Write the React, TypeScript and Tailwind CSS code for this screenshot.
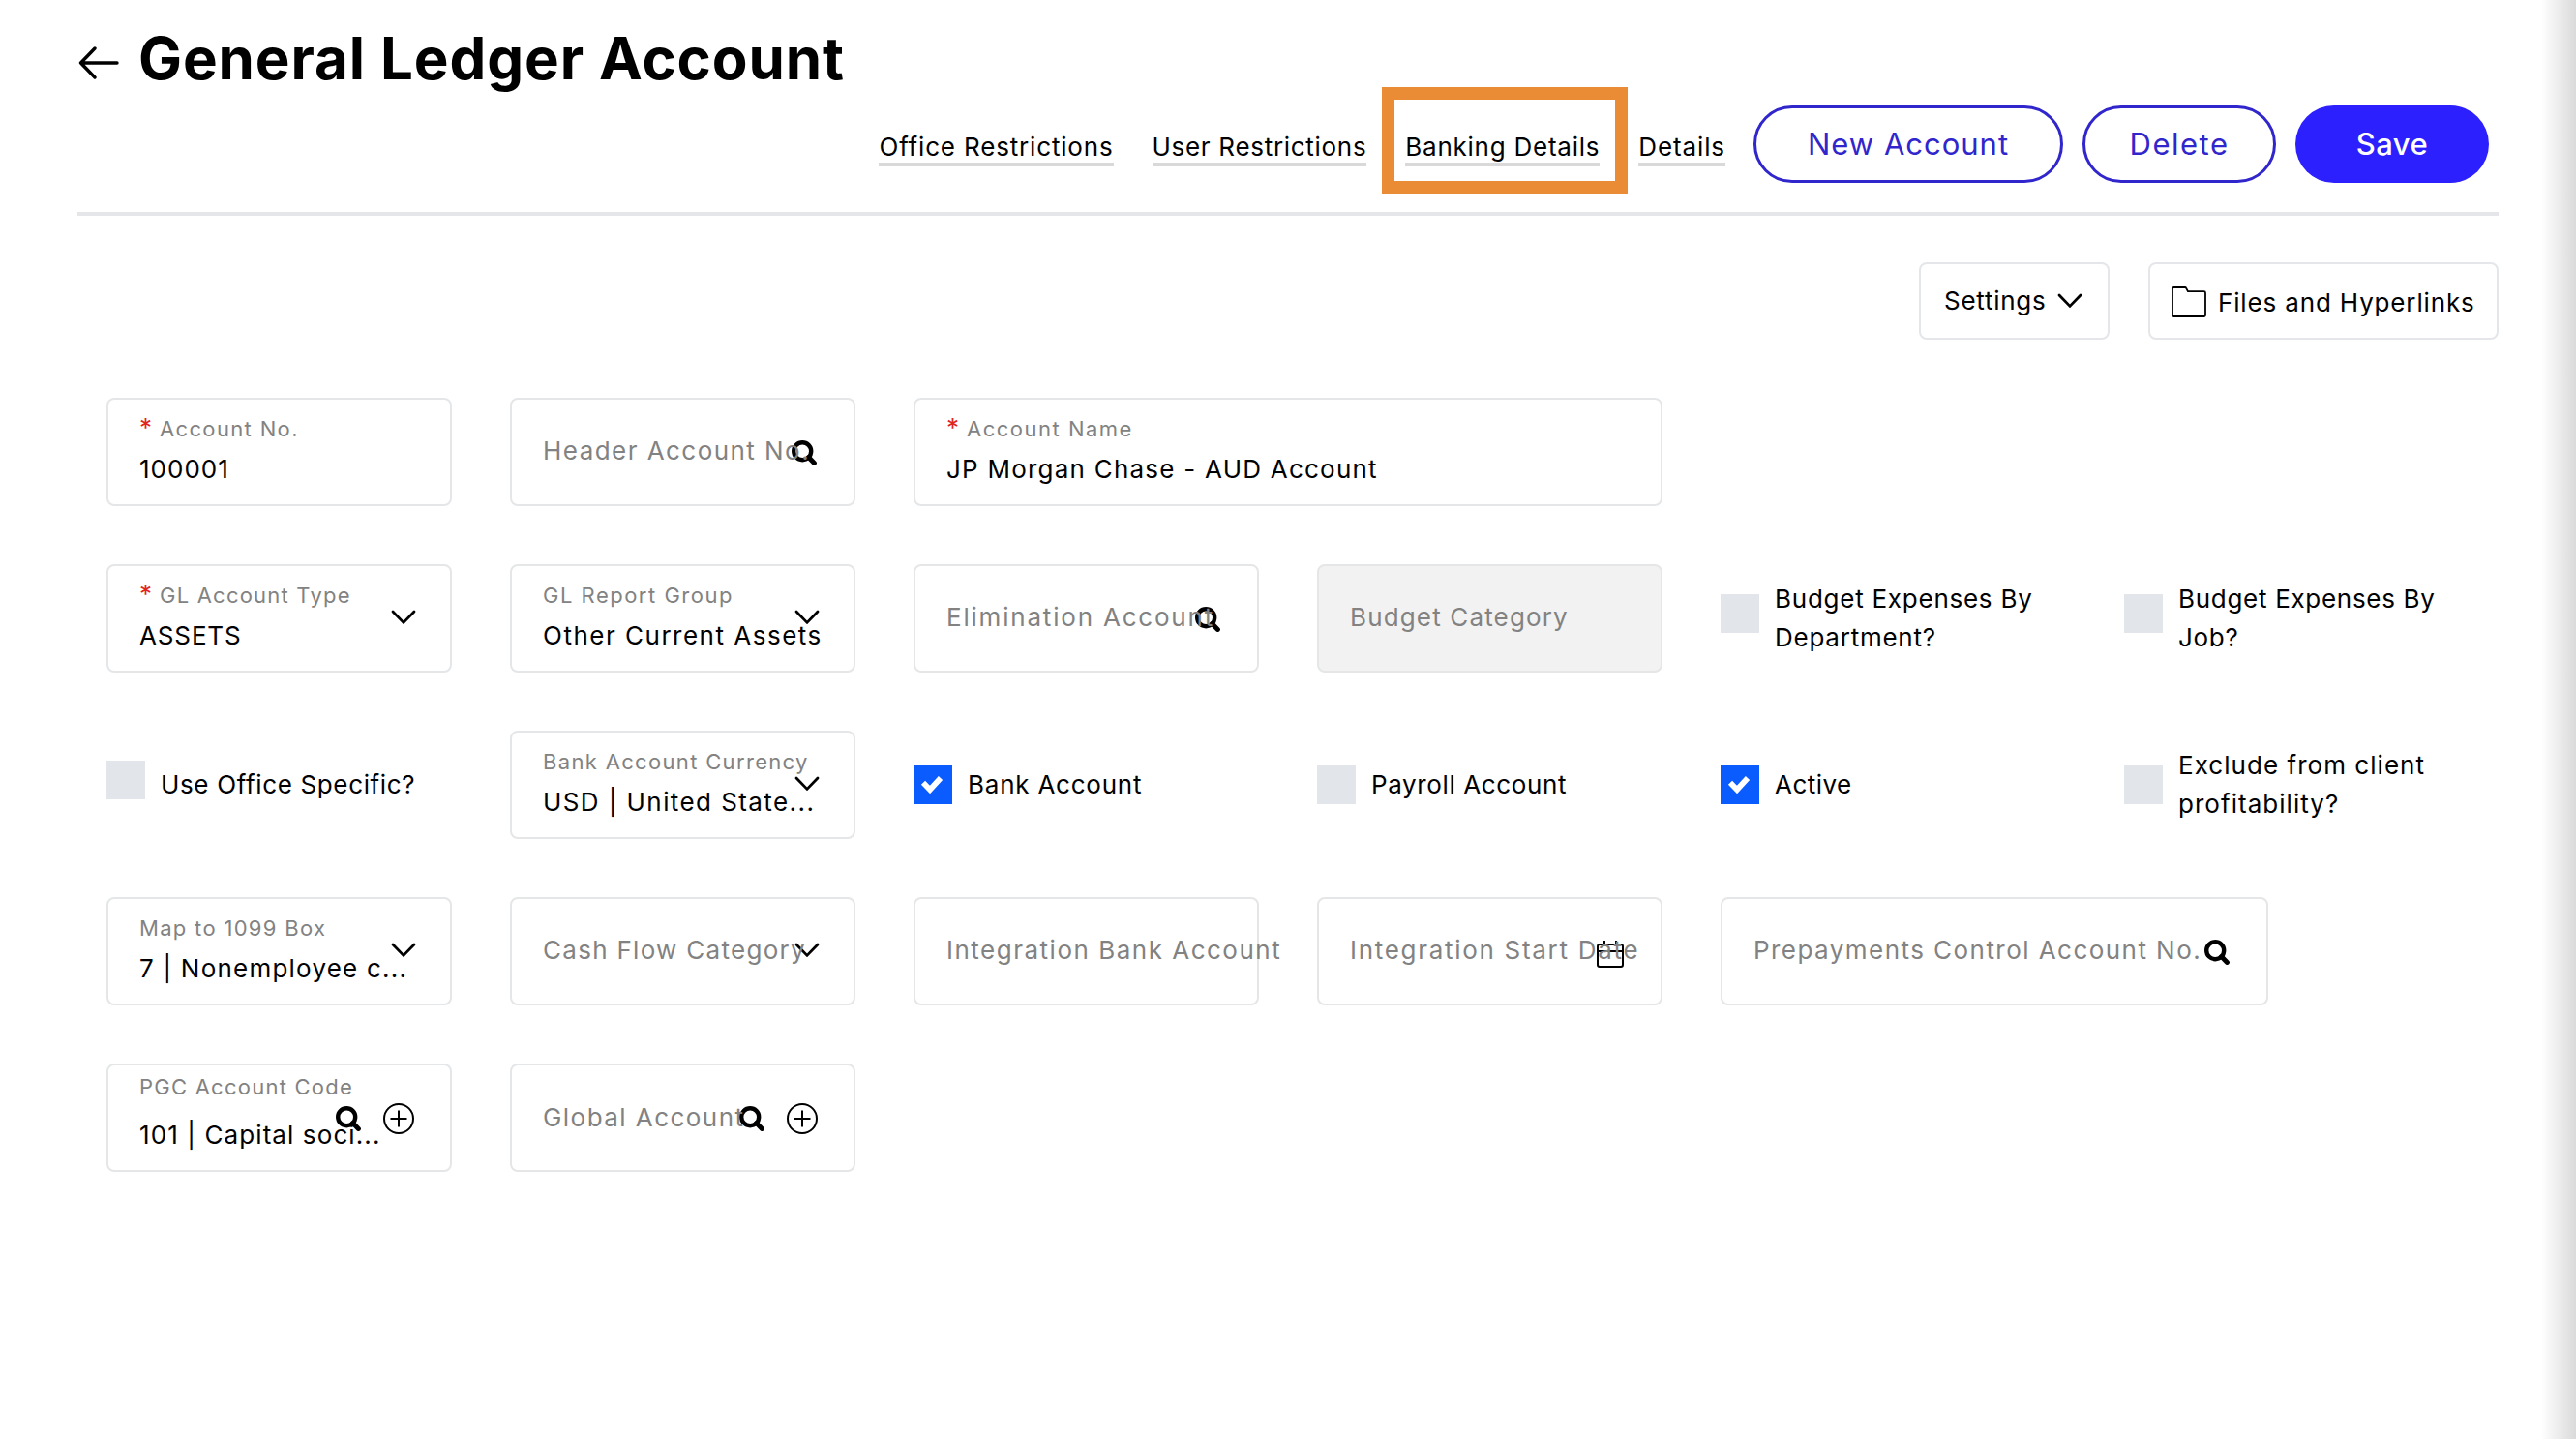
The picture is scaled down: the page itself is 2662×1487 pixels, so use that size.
import type { ReactNode } from 'react';
import clsx from 'clsx';

type FieldIcon = 'chevron' | 'search' | 'calendar' | 'searchAdd';

interface FieldProps {
  label: string;
  labelClass: string;
  value?: string;
  valueClass?: string;
  required?: boolean;
  disabled?: boolean;
  // label sits a little higher on lookups that can create a record
  tall?: boolean;
  icon?: FieldIcon;
  className?: string;
}

interface CheckProps {
  lines: string[];
  textClass: string;
  checked?: boolean;
  raised?: boolean;
}

function BackArrow() {
  return (
    <svg className="w-[42px] h-[34px]" viewBox="0 0 42 34" fill="none" stroke="black" strokeWidth="3.4" strokeLinecap="round" strokeLinejoin="round">
      <path d="M40 17H2.5M17 2 2.5 17 17 32" />
    </svg>
  );
}

function Chevron({ className }: { className?: string }) {
  return (
    <svg className={clsx('w-[26px] h-4', className)} viewBox="0 0 26 16" fill="none" stroke="black" strokeWidth="2.8" strokeLinecap="round" strokeLinejoin="round">
      <path d="M2 2 13 13.4 24 2" />
    </svg>
  );
}

function SearchIcon({ className }: { className?: string }) {
  return (
    <svg className={clsx('w-[26px] h-[26px]', className)} viewBox="0 0 26 26" fill="none" stroke="black" strokeLinecap="round">
      <circle cx="11.2" cy="11.2" r="9" strokeWidth="4.4" />
      <path d="M17.6 17.6 23.4 23.4" strokeWidth="5" />
    </svg>
  );
}

function PlusCircle({ className }: { className?: string }) {
  return (
    <svg className={clsx('w-8 h-8', className)} viewBox="0 0 32 32" fill="none" stroke="black" strokeWidth="2">
      <circle cx="16" cy="16" r="15" />
      <path d="M16 7.5v17M7.5 16h17" />
    </svg>
  );
}

function CalendarIcon({ className }: { className?: string }) {
  return (
    <svg className={clsx('w-7 h-7', className)} viewBox="0 0 28 28" fill="none" stroke="black" strokeWidth="2">
      <rect x="1" y="4" width="26" height="23" rx="2" />
      <path d="M1 11h26M8 0v4M20 0v4" />
    </svg>
  );
}

function FolderIcon() {
  return (
    <svg className="w-9 h-8" viewBox="0 0 36 32" fill="none" stroke="black" strokeWidth="1.8" strokeLinejoin="round">
      <path d="M1 2.5A1.5 1.5 0 0 1 2.500 1H13.800a1.500 1.500 0 0 1 1.400.9L17 5.200H33.500A1.500 1.500 0 0 1 35 6.700V29.500a1.500 1.500 0 0 1-1.500 1.500H2.500A1.500 1.500 0 0 1 1 29.500z" />
    </svg>
  );
}

function Field({ label, labelClass, value, valueClass, required, disabled, tall, icon, className }: FieldProps) {
  return (
    <div
      className={clsx(
        'relative h-28 rounded-lg border-2 border-[#e4e6e8] pl-8 whitespace-nowrap',
        disabled && 'bg-[#f2f2f2]',
        className
      )}
    >
      {icon === 'chevron' && <Chevron className="absolute right-[35px] top-[45px]" />}
      {icon === 'search' && <SearchIcon className="absolute right-[38px] top-[42px]" />}
      {icon === 'calendar' && <CalendarIcon className="absolute right-[38px] top-[43px]" />}
      {icon === 'searchAdd' && (
        <>
          <SearchIcon className="absolute right-[92px] top-[42px]" />
          <PlusCircle className="absolute right-[37px] top-[39px]" />
        </>
      )}

      {value ? (
        <div className={clsx('relative', tall ? 'pt-2' : 'pt-4')}>
          <div className={clsx('text-[22px] leading-7 text-[#828282]', labelClass)}>
            {required && <span className="inline-block w-[21px] text-[26px] leading-none tracking-normal text-[#e0261c]">*</span>}
            {label}
          </div>
          <div className={clsx('text-[26px] leading-8', tall ? 'mt-5' : 'mt-3', valueClass)}>{value}</div>
        </div>
      ) : (
        <div className={clsx('relative text-[26px] leading-8 text-[#828282]', tall ? 'pt-[38px]' : 'pt-[37px]', labelClass)}>
          {label}
        </div>
      )}
    </div>
  );
}

function Check({ lines, textClass, checked, raised }: CheckProps) {
  return (
    <div className="flex h-28 items-center gap-4">
      <div className={clsx('w-10 h-10 shrink-0', checked ? 'bg-[#0a5cff]' : 'bg-[#e2e5ea]', raised && '-mt-2.5')}>
        {checked && (
          <svg className="w-10 h-10" viewBox="0 0 40 40" fill="none" stroke="white" strokeWidth="5.8">
            <path d="M10 17.800 17 25 28 13" />
          </svg>
        )}
      </div>
      <div className={clsx('text-[26px] leading-10 whitespace-nowrap', textClass)}>
        {lines.map((line) => (
          <div key={line}>{line}</div>
        ))}
      </div>
    </div>
  );
}

function HeaderLink({ className, children }: { className: string; children: ReactNode }) {
  return (
    <a className={clsx('relative border-b-4 border-[#d9d9d9] text-[26px] leading-8 whitespace-nowrap', className)}>
      {children}
    </a>
  );
}

export default function App() {
  return (
    <div className="relative w-[2662px] h-[1487px] overflow-hidden bg-white px-20 font-[Inter,'Liberation_Sans',sans-serif] text-black">
      {/* Header */}
      <header className="border-b-4 border-[#e4e6e9] pt-7 pb-[30px]">
        <div className="flex h-16 items-center gap-5 pl-px">
          <div className="pt-2.5">
            <BackArrow />
          </div>
          <h1 className="text-[60px] leading-[64px] font-bold tracking-[0.9px] whitespace-nowrap">General Ledger Account</h1>
        </div>

        <div className="mt-[17px] flex h-20 justify-end gap-5 pr-2.5">
          <nav className="mr-[9px] flex items-start gap-10 pt-[27px]">
            <HeaderLink className="tracking-[0.83px]">Office Restrictions</HeaderLink>
            <HeaderLink className="tracking-[0.7px]">User Restrictions</HeaderLink>
            <HeaderLink className="tracking-[0.75px]">
              Banking Details
              <span className="absolute -left-6 -top-[46px] w-[254px] h-[110px] border-[13px] border-[#ea8b35]" />
            </HeaderLink>
            <HeaderLink className="tracking-[0.9px]">Details</HeaderLink>
          </nav>
          <button className="w-80 rounded-full border-[3px] border-[#3026cc] text-[31px] tracking-[1px] text-[#3026cc]">
            New Account
          </button>
          <button className="w-50 rounded-full border-[3px] border-[#3026cc] text-[31px] tracking-[1.5px] text-[#3026cc]">
            Delete
          </button>
          <button className="w-50 rounded-full bg-[#2d20fe] text-[31px] font-medium tracking-[0.5px] text-white">Save</button>
        </div>
      </header>

      {/* Toolbar */}
      <div className="mt-12 flex justify-end gap-10">
        <button className="flex w-[197px] h-20 items-center rounded-lg border-2 border-[#e4e6e9] pl-6 pb-0.5 text-[26px]">
          <span className="w-[117px] text-left tracking-[0.74px]">Settings</span>
          <Chevron className="mt-0.5" />
        </button>
        <button className="flex w-[362px] h-20 items-center gap-3 rounded-lg border-2 border-[#e4e6e9] pl-[22px] pt-0.5 text-[26px] tracking-[0.85px] whitespace-nowrap">
          <FolderIcon />
          Files and Hyperlinks
        </button>
      </div>

      {/* Form */}
      <div className="mt-15 ml-[30px] grid w-[2442px] grid-cols-6 gap-15">
        <Field required label="Account No." labelClass="tracking-[1.35px]" value="100001" valueClass="tracking-[1px]" />
        <Field label="Header Account No." labelClass="tracking-[1.45px]" icon="search" />
        <Field
          required
          label="Account Name"
          labelClass="tracking-[1.5px]"
          value="JP Morgan Chase - AUD Account"
          valueClass="tracking-[1.23px]"
          className="col-span-2"
        />
        <div className="col-span-2" />

        <Field required label="GL Account Type" labelClass="tracking-[1.22px]" value="ASSETS" valueClass="tracking-[0.86px]" icon="chevron" />
        <Field label="GL Report Group" labelClass="tracking-[1.5px]" value="Other Current Assets" valueClass="tracking-[1.5px]" icon="chevron" />
        <Field label="Elimination Account" labelClass="tracking-[1.8px]" icon="search" />
        <Field disabled label="Budget Category" labelClass="tracking-[1.15px]" />
        <Check raised lines={['Budget Expenses By', 'Department?']} textClass="tracking-[0.75px]" />
        <Check raised lines={['Budget Expenses By', 'Job?']} textClass="tracking-[0.7px]" />

        <Check raised lines={['Use Office Specific?']} textClass="tracking-[0.65px]" />
        <Field label="Bank Account Currency" labelClass="tracking-[1.33px]" value="USD | United State..." valueClass="tracking-[1.42px]" icon="chevron" />
        <Check checked lines={['Bank Account']} textClass="tracking-[0.77px]" />
        <Check lines={['Payroll Account']} textClass="tracking-[0.62px]" />
        <Check checked lines={['Active']} textClass="tracking-[0.46px]" />
        <Check lines={['Exclude from client', 'profitability?']} textClass="tracking-[1.04px]" />

        <Field label="Map to 1099 Box" labelClass="tracking-[1.31px]" value="7 | Nonemployee c..." valueClass="tracking-[1.22px]" icon="chevron" />
        <Field label="Cash Flow Category" labelClass="tracking-[1.29px]" icon="chevron" />
        <Field label="Integration Bank Account" labelClass="tracking-[1.5px]" />
        <Field label="Integration Start Date" labelClass="tracking-[1.7px]" icon="calendar" />
        <Field label="Prepayments Control Account No." labelClass="tracking-[1.45px]" icon="search" className="col-span-2 w-[566px]" />

        <Field tall label="PGC Account Code" labelClass="tracking-[1.24px]" value="101 | Capital soci..." valueClass="tracking-[1.1px]" icon="searchAdd" />
        <Field tall label="Global Account" labelClass="tracking-[1.45px]" icon="searchAdd" />
      </div>

      {/* Edge shadow of the drawer */}
      <div className="absolute inset-y-0 right-0 w-9 bg-linear-to-r from-white to-[#dadada]" />
    </div>
  );
}
